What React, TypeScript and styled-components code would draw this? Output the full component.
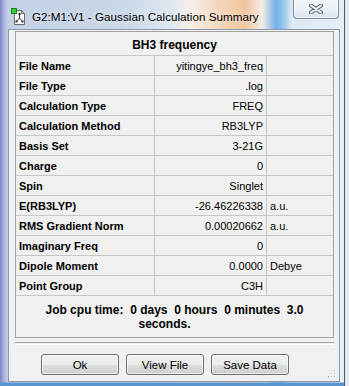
import { Fragment } from 'react';
import styled, { createGlobalStyle } from 'styled-components';

const GlobalStyle = createGlobalStyle`
  html, body {
    margin: 0;
    padding: 0;
  }
  body {
    width: 349px;
    height: 386px;
    overflow: hidden;
    background: #e3ebf3;
    font-family: "Liberation Sans", Arial, sans-serif;
  }
`;

const Desktop = styled.div`
  width: 349px;
  height: 386px;
  display: flex;
`;

// Aero glass frame (blurred desktop behind it)
const Window = styled.div`
  width: 345px;
  height: 386px;
  box-sizing: border-box;
  display: flex;
  flex-direction: column;
  border-right: 1px solid #4f5a66;
  background:
    linear-gradient(to bottom, rgba(0, 0, 0, 0) 382px, #5a95cf 383px),
    linear-gradient(
      90deg,
      #7e86c8 0,
      #a9b3dd 4px,
      #c3d0e6 8px,
      #c9d7e7 120px,
      #dde6f0 170px,
      #f6efe8 190px,
      #f3d6bb 220px,
      #f0c59c 245px,
      #f4ede6 262px,
      #72b0e6 276px,
      #9cc8ee 284px,
      #dfeaf5 292px,
      #e6eef7 100%
    );
`;

const TitleBar = styled.div`
  height: 29px;
  flex-shrink: 0;
  display: flex;
  align-items: flex-start;
  padding-left: 11px;
`;

const AppIcon = styled.svg`
  width: 16px;
  height: 17px;
  margin-top: 8px;
  flex-shrink: 0;
`;

const Caption = styled.span`
  margin-left: 5px;
  margin-top: 9px;
  font-size: 11.7px;
  line-height: 16px;
  color: #000;
  white-space: nowrap;
  text-shadow: 0 0 6px rgba(255, 255, 255, 0.9);
`;

const CloseButton = styled.div`
  margin-left: auto;
  margin-right: 5px;
  margin-top: -1px;
  width: 46px;
  height: 20px;
  box-sizing: border-box;
  border: 1px solid #7d8a9a;
  border-top: none;
  border-radius: 0 0 4px 4px;
  background: linear-gradient(to bottom, #f4f7fb 0%, #e9eff6 50%, #dbe5f0 100%);
  box-shadow: inset 0 0 0 1px rgba(255, 255, 255, 0.7);
  display: flex;
  align-items: center;
  justify-content: center;
`;

const ClientArea = styled.div`
  position: relative;
  flex: 1;
  margin: 0 4px 4px 8px;
  border: 1px solid #8a99ab;
  background: #f0f0f0;
  padding: 1px 5px 0 6px;
  display: flex;
  flex-direction: column;
`;

const Panel = styled.div`
  border: 1px solid #a3a3a3;
  background: #f0f0f0;
`;

const Table = styled.div`
  display: grid;
  grid-template-columns: 139px 112px 1fr;
  border-bottom: 1px solid #c6c6c6;
`;

const TableTitle = styled.div`
  grid-column: 1 / -1;
  height: 23px;
  box-sizing: border-box;
  padding-top: 2px;
  display: flex;
  align-items: center;
  justify-content: center;
  font-size: 12px;
  font-weight: bold;
  color: #000;
`;

const Cell = styled.div<{ $align?: 'left' | 'right'; $bold?: boolean; $last?: boolean }>`
  height: 20px;
  box-sizing: border-box;
  border-top: 1px solid #c6c6c6;
  border-right: ${p => (p.$last ? 'none' : '1px solid #c6c6c6')};
  padding: 0 3px;
  display: flex;
  align-items: center;
  justify-content: ${p => (p.$align === 'right' ? 'flex-end' : 'flex-start')};
  font-size: 11px;
  font-weight: ${p => (p.$bold ? 'bold' : 'normal')};
  color: #000;
  white-space: nowrap;
`;

const JobTime = styled.div`
  padding: 7px 0 6px;
  text-align: center;
  font-size: 12px;
  font-weight: bold;
  line-height: 14px;
  color: #000;
  white-space: pre;
`;

const JobLine = styled.div<{ $shift?: number }>`
  padding-right: ${p => p.$shift ?? 0}px;
`;

const Separator = styled.div`
  margin-top: 4px;
  height: 1px;
  border-top: 1px solid #a0a0a0;
  border-bottom: 1px solid #ffffff;
`;

const ButtonRow = styled.div`
  display: flex;
  gap: 7px;
  padding-left: 26px;
  margin-top: 9px;
`;

const Button = styled.button`
  width: 78px;
  height: 21px;
  box-sizing: border-box;
  padding: 0;
  border: 1px solid #707070;
  border-radius: 3px;
  background: linear-gradient(to bottom, #f2f2f2 0%, #ebebeb 50%, #dddddd 51%, #cfcfcf 100%);
  box-shadow: inset 0 0 0 1px rgba(255, 255, 255, 0.6);
  font-family: "Liberation Sans", Arial, sans-serif;
  font-size: 11.5px;
  color: #000;
`;

const Grip = styled.svg`
  position: absolute;
  right: 2px;
  bottom: 2px;
  width: 10px;
  height: 10px;
`;

const rows: [string, string, string][] = [
  ['File Name', 'yitingye_bh3_freq', ''],
  ['File Type', '.log', ''],
  ['Calculation Type', 'FREQ', ''],
  ['Calculation Method', 'RB3LYP', ''],
  ['Basis Set', '3-21G', ''],
  ['Charge', '0', ''],
  ['Spin', 'Singlet', ''],
  ['E(RB3LYP)', '-26.46226338', 'a.u.'],
  ['RMS Gradient Norm', '0.00020662', 'a.u.'],
  ['Imaginary Freq', '0', ''],
  ['Dipole Moment', '0.0000', 'Debye'],
  ['Point Group', 'C3H', ''],
];

const gripDots = [
  [8, 2],
  [5, 5],
  [8, 5],
  [2, 8],
  [5, 8],
  [8, 8],
];

export default function App() {
  return (
    <>
      <GlobalStyle />
      <Desktop>
        <Window>
          <TitleBar>
            <AppIcon viewBox="0 0 16 17">
              <path d="M3.5 2.5h7l3 3v11h-10z" fill="#fff" stroke="#6a6a6a" />
              <path d="M10.5 2.5v3h3" fill="none" stroke="#6a6a6a" />
              <line x1="8.5" y1="6" x2="8.5" y2="10" stroke="#333" />
              <line x1="8.5" y1="10" x2="5.5" y2="13.5" stroke="#333" />
              <line x1="8.5" y1="10" x2="11.5" y2="13.5" stroke="#333" />
              <rect x="7.5" y="5" width="2" height="2" fill="#222" />
              <rect x="4.5" y="12.5" width="2" height="2" fill="#222" />
              <rect x="10.5" y="12.5" width="2" height="2" fill="#222" />
              <rect x="0.5" y="0.5" width="5" height="5" fill="#2fd13b" stroke="#16801f" />
            </AppIcon>
            <Caption>G2:M1:V1 - Gaussian Calculation Summary</Caption>
            <CloseButton>
              <svg width="14" height="10" viewBox="0 0 14 10">
                <path d="M2 1.5L12 8.5M12 1.5L2 8.5" stroke="#5d6773" strokeWidth="4" strokeLinecap="round" />
                <path d="M2 1.5L12 8.5M12 1.5L2 8.5" stroke="#fdfdfd" strokeWidth="2" strokeLinecap="round" />
              </svg>
            </CloseButton>
          </TitleBar>
          <ClientArea>
            <Panel>
              <Table>
                <TableTitle>BH3 frequency</TableTitle>
                {rows.map(([label, value, unit]) => (
                  <Fragment key={label}>
                    <Cell $bold>{label}</Cell>
                    <Cell $align="right">{value}</Cell>
                    <Cell $last>{unit}</Cell>
                  </Fragment>
                ))}
              </Table>
              <JobTime>
                <JobLine>Job cpu time:  0 days  0 hours  0 minutes  3.0</JobLine>
                <JobLine $shift={20}>seconds.</JobLine>
              </JobTime>
            </Panel>
            <Separator />
            <ButtonRow>
              <Button>Ok</Button>
              <Button>View File</Button>
              <Button>Save Data</Button>
            </ButtonRow>
            <Grip viewBox="0 0 10 10">
              {gripDots.map(([x, y]) => (
                <g key={`${x}-${y}`}>
                  <rect x={x} y={y} width="1" height="1" fill="#fff" />
                  <rect x={x - 1} y={y - 1} width="1" height="1" fill="#a8a8a8" />
                </g>
              ))}
            </Grip>
          </ClientArea>
        </Window>
      </Desktop>
    </>
  );
}
